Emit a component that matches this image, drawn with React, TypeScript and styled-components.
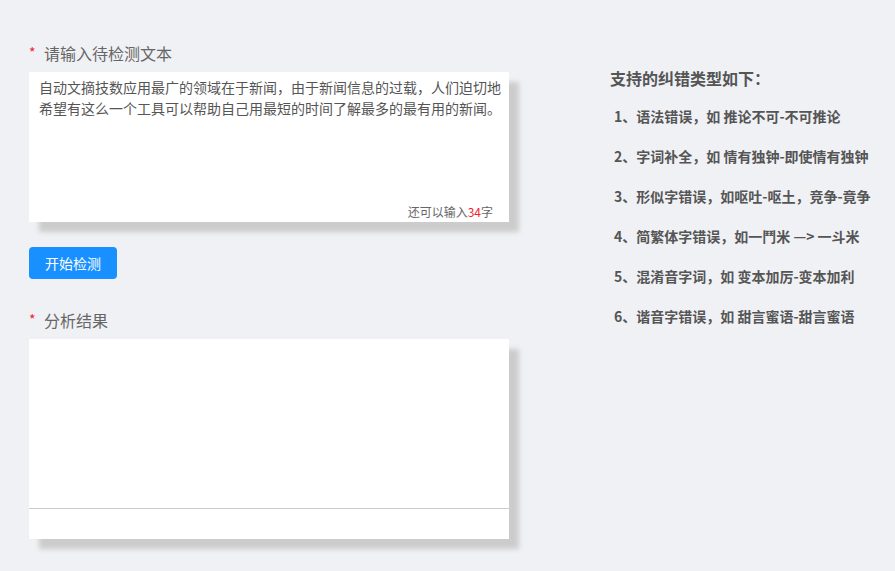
import React from "react";
import styled, { createGlobalStyle } from "styled-components";

const Global = createGlobalStyle`
  html, body { margin: 0; padding: 0; background: #f0f1f5; }
  body { font-family: "Noto Sans CJK SC", "Noto Sans", sans-serif; }
  * { box-sizing: border-box; }
`;

const Page = styled.div`
  display: flex;
  align-items: flex-start;
  padding: 41px 0 0 29px;
  min-height: 571px;
`;

const LeftCol = styled.div`
  width: 480px;
  display: flex;
  flex-direction: column;
`;

const Label = styled.div<{ $top?: number }>`
  display: flex;
  align-items: center;
  font-size: 16px;
  line-height: 24px;
  color: #666;
  margin-top: ${(p) => p.$top ?? 0}px;
  margin-bottom: 7px;
`;

const Star = styled.span`
  color: #f5222d;
  font-size: 14px;
  width: 15px;
  margin-top: -2px;
`;

const Card = styled.div<{ $h: number }>`
  background: #fff;
  box-shadow: 10px 10px 5px #ccc;
  height: ${(p) => p.$h}px;
  display: flex;
  flex-direction: column;
`;

const InputArea = styled.textarea`
  flex: 1;
  border: none;
  outline: none;
  resize: none;
  overflow: hidden;
  background: transparent;
  padding: 5px 2px 0 10px;
  font-family: "Noto Sans CJK SC", sans-serif;
  font-size: 14px;
  line-height: 21px;
  color: #555;
`;

const Counter = styled.div`
  text-align: right;
  font-size: 12px;
  line-height: 16px;
  color: #666;
  padding: 0 16px 2px 0;
`;

const Red = styled.span`
  color: #f5222d;
`;

const Button = styled.button`
  align-self: flex-start;
  margin-top: 25px;
  width: 88px;
  height: 32px;
  border: none;
  border-radius: 4px;
  background: #1890ff;
  color: #fff;
  font-family: "Noto Sans CJK SC", sans-serif;
  font-size: 14px;
  cursor: pointer;
`;

const ResultArea = styled.div`
  height: 170px;
  border-bottom: 1px solid #ccc;
`;

const RightCol = styled.div`
  margin-left: 101px;
  margin-top: 25px;
  color: #555;
`;

const RightTitle = styled.div`
  font-size: 16px;
  font-weight: bold;
  line-height: 24px;
`;

const List = styled.ol`
  list-style: none;
  margin: 16px 0 0 0;
  padding: 0 0 0 4px;
  display: flex;
  flex-direction: column;
  gap: 20px;
`;

const Item = styled.li`
  font-size: 14px;
  font-weight: bold;
  line-height: 20px;
`;

const items = [
  "1、语法错误，如 推论不可-不可推论",
  "2、字词补全，如 情有独钟-即使情有独钟",
  "3、形似字错误，如呕吐-呕土，竞争-竟争",
  "4、简繁体字错误，如一鬥米 —> 一斗米",
  "5、混淆音字词，如 变本加厉-变本加利",
  "6、谐音字错误，如 甜言蜜语-甜言蜜语",
];

export default function App() {
  return (
    <>
      <Global />
      <Page>
        <LeftCol>
          <Label>
            <Star>*</Star>请输入待检测文本
          </Label>
          <Card $h={150}>
            <InputArea
              defaultValue="自动文摘技数应用最广的领域在于新闻，由于新闻信息的过载，人们迫切地希望有这么一个工具可以帮助自己用最短的时间了解最多的最有用的新闻。"
            />
            <Counter>
              还可以输入<Red>34</Red>字
            </Counter>
          </Card>
          <Button>开始检测</Button>
          <Label $top={29}>
            <Star>*</Star>分析结果
          </Label>
          <Card $h={200}>
            <ResultArea />
          </Card>
        </LeftCol>
        <RightCol>
          <RightTitle>支持的纠错类型如下：</RightTitle>
          <List>
            {items.map((t) => (
              <Item key={t}>{t}</Item>
            ))}
          </List>
        </RightCol>
      </Page>
    </>
  );
}
